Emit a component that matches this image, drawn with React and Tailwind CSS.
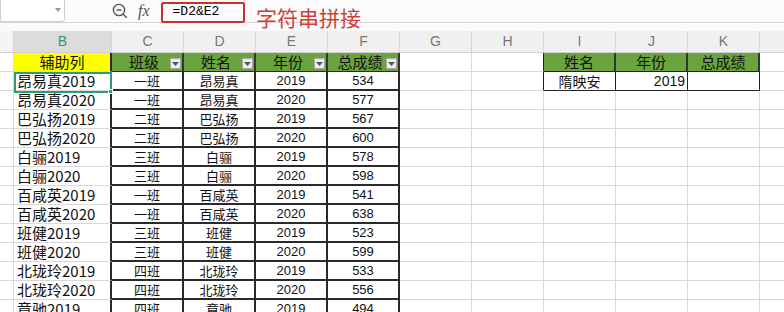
const rows = [
  ['昂易真2019', '一班', '昂易真', '2019', '534'],
  ['昂易真2020', '一班', '昂易真', '2020', '577'],
  ['巴弘扬2019', '二班', '巴弘扬', '2019', '567'],
  ['巴弘扬2020', '二班', '巴弘扬', '2020', '600'],
  ['白骊2019', '三班', '白骊', '2019', '578'],
  ['白骊2020', '三班', '白骊', '2020', '598'],
  ['百咸英2019', '一班', '百咸英', '2019', '541'],
  ['百咸英2020', '一班', '百咸英', '2020', '638'],
  ['班健2019', '三班', '班健', '2019', '523'],
  ['班健2020', '三班', '班健', '2020', '599'],
  ['北珑玲2019', '四班', '北珑玲', '2019', '533'],
  ['北珑玲2020', '四班', '北珑玲', '2020', '556'],
  ['章驰2019', '四班', '章驰', '2019', '494'],
]

const letters = ['B', 'C', 'D', 'E', 'F', 'G', 'H', 'I', 'J', 'K']

function FilterBtn() {
  return (
    <span className="absolute right-[1px] bottom-[2px] w-[11px] h-[11px] bg-[#ececec] border border-[#a8a8a8] flex items-center justify-center">
      <svg width="7" height="4" viewBox="0 0 7 4">
        <path d="M0 0h7L3.5 4z" fill="#555" />
      </svg>
    </span>
  )
}

function Grid({ w, className = '', children }) {
  return (
    <div className={`h-full flex-none flex items-center justify-center border-r border-b border-[#d9d9d9] ${className}`} style={{ width: w }}>
      {children}
    </div>
  )
}

export default function App() {
  return (
    <div
      className="relative w-[784px] h-[312px] overflow-hidden bg-white text-[#111]"
      style={{ fontFamily: '"Noto Sans CJK SC", "Liberation Sans", sans-serif' }}
    >
      {/* formula bar */}
      <div className="h-[23px] flex items-center border-b border-[#d6d6d6] bg-[#fbfbfb]">
        <div className="w-[65px] h-[23px] -mt-[2px] bg-white border border-[#cfcfcf] rounded-br-[3px] flex items-center justify-end pr-[3px]">
          <svg width="6" height="4" viewBox="0 0 6 4">
            <path d="M0 0h6L3 4z" fill="#999" />
          </svg>
        </div>
        <svg className="ml-[47px]" width="16" height="16" viewBox="0 0 16 16" fill="none" stroke="#555" strokeWidth="1.4">
          <circle cx="7" cy="7" r="5.6" />
          <path d="M4.6 7h4.8M11.2 11.2l3.6 3.6" />
        </svg>
        <span className="ml-[10px] text-[16px] italic text-[#555]" style={{ fontFamily: '"Liberation Serif", serif' }}>fx</span>
        <div className="ml-[11px] w-[84px] h-[21px] mt-[2px] border-2 border-[#c9302c] rounded-[2px] flex items-center pl-[10px] text-[13px] text-black" style={{ fontFamily: '"Liberation Mono", monospace' }}>
          =D2&amp;E2
        </div>
      </div>
      <div className="h-[8px] bg-[#fafafa]" />

      {/* column headers */}
      <div className="flex h-[22px] bg-[#f0f0f0] border-b border-[#d0d0d0]">
        <div className="w-[14px] h-full border-r border-[#d6d6d6] bg-[#f5f5f5]" />
        {letters.map((l, i) => (
          <div
            key={l}
            className={`h-full flex items-center justify-center border-r border-[#d6d6d6] text-[14px] ${i === 0 ? 'w-[98px] bg-[#dcdcdc] text-[#2e9b76]' : 'w-[72px] text-[#777]'}`}
            style={{ fontFamily: '"Liberation Sans", sans-serif' }}
          >
            {l}
          </div>
        ))}
        <div className="flex-1 h-full" />
      </div>

      {/* header row */}
      <div className="flex h-[19px]">
        <Grid w={14} />
        <Grid w={98} className="bg-[#ffff00] !border-r-2 !border-r-[#2a2a2a] text-[15px]">辅助列</Grid>
        {['班级', '姓名', '年份', '总成绩'].map(t => (
          <Grid key={t} w={72} className="relative bg-[#6aa43e] !border-r-2 !border-r-[#2f3a28] !border-b-[#2a2a2a] text-[15px] pr-[6px]">
            {t}
            <FilterBtn />
          </Grid>
        ))}
        <Grid w={72} />
        <Grid w={72} className="!border-r-[#222]" />
        {['姓名', '年份', '总成绩'].map(t => (
          <Grid key={t} w={72} className="bg-[#6aa43e] !border-r-2 !border-r-[#2f3a28] !border-b-[#222] text-[15px]">{t}</Grid>
        ))}
        <div className="flex-1 h-full border-b border-[#d9d9d9]" />
      </div>

      {/* data rows */}
      {rows.map((r, i) => (
        <div key={i} className="flex h-[19px]">
          <Grid w={14} />
          <Grid w={98} className="!justify-start pl-[3px] !border-r-2 !border-r-[#2a2a2a] text-[15px]">{r[0]}</Grid>
          <Grid w={72} className="!border-r-2 !border-b-2 !border-[#2a2a2a] text-[13px]">{r[1]}</Grid>
          <Grid w={72} className="!border-r-2 !border-b-2 !border-[#2a2a2a] text-[13px]">{r[2]}</Grid>
          <Grid w={72} className="!border-r-2 !border-b-2 !border-[#2a2a2a] text-[13px]">
            <span style={{ fontFamily: '"Liberation Sans", sans-serif' }}>{r[3]}</span>
          </Grid>
          <Grid w={72} className="!border-r-2 !border-b-2 !border-[#2a2a2a] text-[13px]">
            <span style={{ fontFamily: '"Liberation Sans", sans-serif' }}>{r[4]}</span>
          </Grid>
          <Grid w={72} />
          <Grid w={72} className={i === 0 ? '!border-r-[#222]' : ''} />
          {i === 0 ? (
            <>
              <Grid w={72} className="!border-r-[#222] !border-b-[#222] text-[14px]">隋映安</Grid>
              <Grid w={72} className="!justify-end pr-[2px] !border-r-[#222] !border-b-[#222] text-[14px]">
                <span style={{ fontFamily: '"Liberation Sans", sans-serif' }}>2019</span>
              </Grid>
              <Grid w={72} className="!border-r-[#222] !border-b-[#222]" />
            </>
          ) : (
            <>
              <Grid w={72} />
              <Grid w={72} />
              <Grid w={72} />
            </>
          )}
          <div className="flex-1 h-full border-b border-[#d9d9d9]" />
        </div>
      ))}

      {/* active cell B2 */}
      <div className="absolute left-[14px] top-[72px] w-[98px] h-[21px] border-2 border-[#2e9b76] pointer-events-none">
        <span className="absolute -right-[3px] -bottom-[3px] w-[5px] h-[5px] bg-[#2e9b76] border border-white" />
      </div>

      {/* annotation */}
      <div className="absolute left-[256px] top-[7px] text-[21px] leading-none text-[#cf3f36]">
        字符串拼接
      </div>
    </div>
  )
}
